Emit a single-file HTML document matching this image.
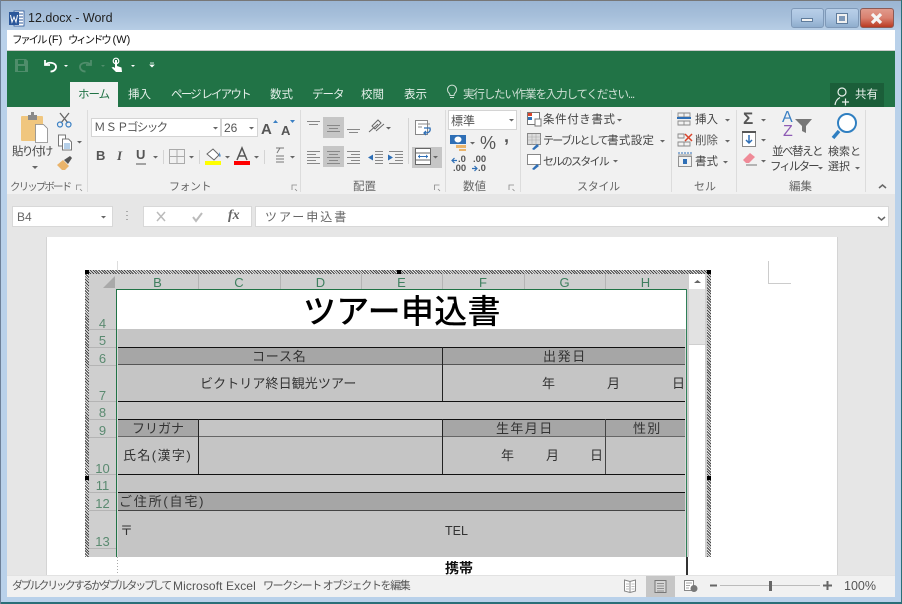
<!DOCTYPE html>
<html><head><meta charset="utf-8"><style>
html,body{margin:0;padding:0}
body{width:902px;height:604px;overflow:hidden;position:relative;background:#b9d1ea;font-family:"Liberation Sans","Noto Sans CJK JP",sans-serif;color:#444}
.b{position:absolute}
.t{position:absolute;white-space:nowrap;line-height:1;font-size:12px;font-family:"Liberation Sans","Noto Sans CJK JP",sans-serif}
.k{font-size:11px;letter-spacing:-1.7px}
.m{font-size:10.5px;letter-spacing:-2.2px}
.s{color:#333;font-size:13px;letter-spacing:0}
.h{color:#3f7f5f;font-size:13px;text-align:center;position:absolute;line-height:1}
.r{color:#5a8a70;font-size:13px;position:absolute;left:89px;width:27px;text-align:center;line-height:1}
svg{position:absolute;left:0;top:0}
</style></head><body>
<!-- title -->
<div class="b" style="left:0;top:0;width:902px;height:30px;background:linear-gradient(#9bb5d3,#a6bfda 50%,#b7cde5);border-top:1px solid #777;box-sizing:border-box"></div>
<div class="t" style="left:28px;top:12px;font-size:12.5px;color:#222">12.docx - Word</div>
<!-- menu -->
<div class="b" style="left:7px;top:30px;width:888px;height:20px;background:#fff"></div>
<div class="t" style="left:12px;top:35px;font-size:11px;color:#111"><span class="m">ファイル</span> (F)</div>
<div class="t" style="left:68px;top:35px;font-size:11px;color:#111"><span class="m">ウィンドウ</span> (W)</div>
<!-- green -->
<div class="b" style="left:7px;top:50px;width:888px;height:57px;background:#217346;border-top:1px solid #ccc;box-sizing:border-box"></div>
<div class="b" style="left:70px;top:82px;width:48px;height:25px;background:#f1f1f1"></div>
<div class="t" style="left:78px;top:90px;color:#217346;font-size:11.5px;letter-spacing:-1px">ホーム</div>
<div class="t" style="left:128px;top:90px;color:#e4efe9;font-size:11.5px">挿入</div>
<div class="t" style="left:171px;top:90px;color:#e4efe9;font-size:11.5px;letter-spacing:-1.8px">ページ レイアウト</div>
<div class="t" style="left:270px;top:90px;color:#e4efe9;font-size:11.5px">数式</div>
<div class="t" style="left:312px;top:90px;color:#e4efe9;font-size:11.5px;letter-spacing:-1px">データ</div>
<div class="t" style="left:361px;top:90px;color:#e4efe9;font-size:11.5px">校閲</div>
<div class="t" style="left:404px;top:90px;color:#e4efe9;font-size:11.5px">表示</div>
<div class="t" style="left:463px;top:90px;color:#cfe0d6;font-size:11.5px;letter-spacing:-1.15px">実行したい作業を入力してください...</div>
<div class="b" style="left:830px;top:83px;width:54px;height:24px;background:#1b5e39"></div>
<div class="t" style="left:855px;top:90px;color:#e8f0eb;font-size:11.5px">共有</div>
<!-- ribbon -->
<div class="b" style="left:7px;top:107px;width:888px;height:87px;background:#f1f1f1"></div>
<div class="b" style="left:7px;top:194px;width:888px;height:34px;background:#e6e6e6"></div>
<div class="b" style="left:87px;top:110px;width:1px;height:82px;background:#dcdcdc"></div>
<div class="b" style="left:300px;top:110px;width:1px;height:82px;background:#dcdcdc"></div>
<div class="b" style="left:445px;top:110px;width:1px;height:82px;background:#dcdcdc"></div>
<div class="b" style="left:520px;top:110px;width:1px;height:82px;background:#dcdcdc"></div>
<div class="b" style="left:671px;top:110px;width:1px;height:82px;background:#dcdcdc"></div>
<div class="b" style="left:736px;top:110px;width:1px;height:82px;background:#dcdcdc"></div>
<div class="b" style="left:865px;top:110px;width:1px;height:82px;background:#dcdcdc"></div>
<!-- ribbon boxes -->
<div class="b" style="left:91px;top:118px;width:130px;height:19px;background:#fff;border:1px solid #d4d4d4;box-sizing:border-box"></div>
<div class="b" style="left:221px;top:118px;width:37px;height:19px;background:#fff;border:1px solid #d4d4d4;box-sizing:border-box"></div>
<div class="b" style="left:448px;top:110px;width:69px;height:20px;background:#fff;border:1px solid #d4d4d4;box-sizing:border-box"></div>
<div class="b" style="left:323px;top:117px;width:21px;height:21px;background:#c6c6c6"></div>
<div class="b" style="left:323px;top:146px;width:21px;height:21px;background:#c6c6c6"></div>
<div class="b" style="left:412px;top:147px;width:30px;height:21px;background:#c6c6c6"></div>
<!-- ribbon text -->
<div class="t" style="left:12px;top:147px;font-size:11.5px;letter-spacing:-1.6px;color:#444">貼り付け</div>
<div class="t" style="left:10px;top:182px;font-size:10.5px;letter-spacing:-1.9px;color:#666">クリップボード</div>
<div class="t" style="left:169px;top:182px;font-size:11px;letter-spacing:-.5px;color:#666">フォント</div>
<div class="t" style="left:353px;top:182px;font-size:11.5px;color:#666">配置</div>
<div class="t" style="left:463px;top:182px;font-size:11.5px;color:#666">数値</div>
<div class="t" style="left:577px;top:182px;font-size:11px;letter-spacing:-.3px;color:#666">スタイル</div>
<div class="t" style="left:694px;top:182px;font-size:11px;color:#666">セル</div>
<div class="t" style="left:789px;top:182px;font-size:11.5px;color:#666">編集</div>
<div class="t" style="left:94px;top:123px;font-size:11.5px;color:#555;letter-spacing:-1.6px">Ｍ Ｓ Ｐゴシック</div>
<div class="t" style="left:224px;top:122px;font-size:12px;color:#555">26</div>
<div class="t" style="left:451px;top:115px;font-size:12px;color:#555">標準</div>
<div class="t" style="left:543px;top:115px;font-size:11.5px;color:#444;letter-spacing:.6px">条件付き書式</div>
<div class="t" style="left:543px;top:136px;font-size:11.5px;color:#444;letter-spacing:.3px"><span class="k">テーブルとして</span>書式設定</div>
<div class="t" style="left:543px;top:157px;font-size:11.5px;color:#444"><span class="k">セルのスタイル</span></div>
<div class="t" style="left:695px;top:115px;font-size:11.5px;color:#444">挿入</div>
<div class="t" style="left:695px;top:136px;font-size:11.5px;color:#555">削除</div>
<div class="t" style="left:695px;top:157px;font-size:11.5px;color:#444">書式</div>
<div class="t" style="left:772px;top:147px;font-size:11.5px;color:#444;letter-spacing:-1.5px">並べ替えと</div>
<div class="t" style="left:770px;top:162px;font-size:11.5px;color:#444;letter-spacing:-1.9px">フィルター</div>
<div class="t" style="left:828px;top:147px;font-size:11px;color:#444">検索と</div>
<div class="t" style="left:828px;top:162px;font-size:11px;color:#444">選択</div>
<div class="t" style="left:96px;top:149px;font-size:13px;font-weight:bold;color:#555">B</div>
<div class="t" style="left:117px;top:149px;font-size:13px;font-weight:bold;font-style:italic;font-family:'Liberation Serif',serif;color:#555">I</div>
<div class="t" style="left:136px;top:148px;font-size:13px;font-weight:bold;color:#555">U</div>
<div class="t" style="left:261px;top:122px;font-size:15px;font-weight:bold;color:#555">A</div>
<div class="t" style="left:281px;top:124px;font-size:13px;font-weight:bold;color:#555">A</div>
<div class="t" style="left:480px;top:134px;font-size:18px;color:#555">%</div>
<div class="t" style="left:504px;top:127px;font-size:18px;font-weight:bold;color:#555">,</div>
<div class="t" style="left:458px;top:155px;font-size:9.5px;font-weight:bold;color:#555">.0</div>
<div class="t" style="left:453px;top:164px;font-size:9.5px;font-weight:bold;color:#555">.00</div>
<div class="t" style="left:473px;top:155px;font-size:9.5px;font-weight:bold;color:#555">.00</div>
<div class="t" style="left:478px;top:164px;font-size:9.5px;font-weight:bold;color:#555">.0</div>
<div class="t" style="left:743px;top:110px;font-size:17px;font-weight:bold;color:#555">Σ</div>
<div class="t" style="left:782px;top:110px;font-size:16px;color:#3b80c4">A</div>
<div class="t" style="left:783px;top:124px;font-size:16px;color:#8e5bb5">Z</div>
<!-- formula bar -->
<div class="b" style="left:12px;top:206px;width:101px;height:21px;background:#fff;border:1px solid #d8d8d8;box-sizing:border-box"></div>
<div class="t" style="left:17px;top:211px;font-size:12px;color:#666">B4</div>
<div class="b" style="left:143px;top:206px;width:109px;height:21px;background:#fff;border:1px solid #d8d8d8;box-sizing:border-box"></div>
<div class="t" style="left:228px;top:209px;font-size:14px;font-weight:bold;font-style:italic;font-family:'Liberation Serif',serif;color:#666">fx</div>
<div class="b" style="left:255px;top:206px;width:634px;height:21px;background:#fff;border:1px solid #d8d8d8;box-sizing:border-box"></div>
<div class="t" style="left:265px;top:211px;font-size:12px;color:#666;letter-spacing:2px">ツアー申込書</div>
<!-- doc area -->
<div class="b" style="left:7px;top:228px;width:888px;height:347px;background:#e6e6e6"></div>
<div class="b" style="left:46px;top:237px;width:792px;height:338px;background:#fff;border-left:1px solid #d4d4d4;border-right:1px solid #d4d4d4;box-sizing:border-box"></div>
<div class="b" style="left:768px;top:261px;width:23px;height:23px;border-left:1px solid #ccc;border-bottom:1px solid #ccc;box-sizing:border-box"></div>
<div class="b" style="left:117px;top:261px;width:1px;height:9px;background:#ddd"></div>
<!-- hatched frame -->
<div class="b" style="left:85px;top:270px;width:626px;height:287px;background:repeating-linear-gradient(45deg,#444 0 1px,#eee 1px 2px)"></div>
<div class="b" style="left:89px;top:274px;width:618px;height:283px;background:#c5c5c5"></div>
<div class="b" style="left:85px;top:270px;width:4px;height:4px;background:#000"></div>
<div class="b" style="left:397px;top:270px;width:4px;height:4px;background:#000"></div>
<div class="b" style="left:707px;top:270px;width:4px;height:4px;background:#000"></div>
<div class="b" style="left:85px;top:476px;width:4px;height:4px;background:#000"></div>
<div class="b" style="left:707px;top:476px;width:4px;height:4px;background:#000"></div>
<!-- headers -->
<div class="b" style="left:89px;top:274px;width:600px;height:15px;background:#cfcfcf"></div>
<div class="b" style="left:89px;top:289px;width:28px;height:268px;background:#cfcfcf"></div>
<svg width="902" height="604" style="z-index:1"><path d="M115 276V288H103Z" fill="#a9a9a9"/></svg>
<div class="b" style="left:198px;top:274px;width:1px;height:15px;background:#b4b4b4"></div>
<div class="b" style="left:280px;top:274px;width:1px;height:15px;background:#b4b4b4"></div>
<div class="b" style="left:361px;top:274px;width:1px;height:15px;background:#b4b4b4"></div>
<div class="b" style="left:442px;top:274px;width:1px;height:15px;background:#b4b4b4"></div>
<div class="b" style="left:524px;top:274px;width:1px;height:15px;background:#b4b4b4"></div>
<div class="b" style="left:605px;top:274px;width:1px;height:15px;background:#b4b4b4"></div>
<div class="h" style="left:117px;width:81px;top:276px">B</div>
<div class="h" style="left:198px;width:82px;top:276px">C</div>
<div class="h" style="left:280px;width:81px;top:276px">D</div>
<div class="h" style="left:361px;width:81px;top:276px">E</div>
<div class="h" style="left:442px;width:82px;top:276px">F</div>
<div class="h" style="left:524px;width:81px;top:276px">G</div>
<div class="h" style="left:605px;width:81px;top:276px">H</div>
<div class="r" style="top:317px">4</div>
<div class="r" style="top:334px">5</div>
<div class="r" style="top:352px">6</div>
<div class="r" style="top:389px">7</div>
<div class="r" style="top:406px">8</div>
<div class="r" style="top:424px">9</div>
<div class="r" style="top:462px">10</div>
<div class="r" style="top:479px">11</div>
<div class="r" style="top:497px">12</div>
<div class="r" style="top:535px">13</div>
<div class="b" style="left:89px;top:329px;width:27px;height:1px;background:#b4b4b4"></div>
<div class="b" style="left:89px;top:347px;width:27px;height:1px;background:#b4b4b4"></div>
<div class="b" style="left:89px;top:365px;width:27px;height:1px;background:#b4b4b4"></div>
<div class="b" style="left:89px;top:401px;width:27px;height:1px;background:#b4b4b4"></div>
<div class="b" style="left:89px;top:419px;width:27px;height:1px;background:#b4b4b4"></div>
<div class="b" style="left:89px;top:437px;width:27px;height:1px;background:#b4b4b4"></div>
<div class="b" style="left:89px;top:474px;width:27px;height:1px;background:#b4b4b4"></div>
<div class="b" style="left:89px;top:492px;width:27px;height:1px;background:#b4b4b4"></div>
<div class="b" style="left:89px;top:510px;width:27px;height:1px;background:#b4b4b4"></div>
<div class="b" style="left:89px;top:548px;width:27px;height:1px;background:#b4b4b4"></div>
<!-- sheet -->
<div class="b" style="left:117px;top:329px;width:1px;height:228px;background:#d8d8d8"></div>
<div class="b" style="left:685px;top:329px;width:1px;height:228px;background:#d8d8d8"></div>
<div class="b" style="left:117px;top:289px;width:570px;height:40px;background:#fff"></div>
<div class="t" style="left:303px;top:294px;font-size:33px;color:#000;font-weight:500;line-height:36px;letter-spacing:.3px">ツアー申込書</div>
<!-- dark bands -->
<div class="b" style="left:118px;top:348px;width:567px;height:17px;background:#a6a6a6"></div>
<div class="b" style="left:118px;top:420px;width:80px;height:17px;background:#a6a6a6"></div>
<div class="b" style="left:443px;top:420px;width:242px;height:17px;background:#a6a6a6"></div>
<div class="b" style="left:118px;top:493px;width:567px;height:17px;background:#a6a6a6"></div>
<!-- h lines -->
<div class="b" style="left:118px;top:347px;width:567px;height:1px;background:#111"></div>
<div class="b" style="left:118px;top:364px;width:567px;height:1px;background:#555"></div>
<div class="b" style="left:118px;top:401px;width:567px;height:1px;background:#111"></div>
<div class="b" style="left:118px;top:419px;width:567px;height:1px;background:#111"></div>
<div class="b" style="left:118px;top:436px;width:567px;height:1px;background:#666"></div>
<div class="b" style="left:118px;top:474px;width:567px;height:1px;background:#111"></div>
<div class="b" style="left:118px;top:492px;width:567px;height:1px;background:#111"></div>
<div class="b" style="left:118px;top:510px;width:567px;height:1px;background:#444"></div>
<!-- v lines -->
<div class="b" style="left:442px;top:347px;width:1px;height:54px;background:#222"></div>
<div class="b" style="left:198px;top:419px;width:1px;height:55px;background:#222"></div>
<div class="b" style="left:442px;top:419px;width:1px;height:55px;background:#222"></div>
<div class="b" style="left:605px;top:419px;width:1px;height:55px;background:#444"></div>
<!-- sheet text -->
<div class="t s" style="left:252px;top:350px;letter-spacing:.8px">コース名</div>
<div class="t s" style="left:543px;top:350px;letter-spacing:1.6px">出発日</div>
<div class="t s" style="left:200px;top:377px;letter-spacing:.1px">ビクトリア終日観光ツアー</div>
<div class="t s" style="left:542px;top:377px">年</div>
<div class="t s" style="left:607px;top:377px">月</div>
<div class="t s" style="left:672px;top:377px">日</div>
<div class="t s" style="left:132px;top:422px">フリガナ</div>
<div class="t s" style="left:496px;top:422px;letter-spacing:1.4px">生年月日</div>
<div class="t s" style="left:633px;top:422px;letter-spacing:1.2px">性別</div>
<div class="t s" style="left:123px;top:449px;letter-spacing:1.4px">氏名(漢字)</div>
<div class="t s" style="left:501px;top:449px">年</div>
<div class="t s" style="left:546px;top:449px">月</div>
<div class="t s" style="left:590px;top:449px">日</div>
<div class="t s" style="left:119px;top:495px;letter-spacing:1.8px">ご住所(自宅)</div>
<div class="t s" style="left:120px;top:524px">〒</div>
<div class="t s" style="left:445px;top:525px;font-size:12.5px">TEL</div>
<!-- selection -->
<div class="b" style="left:116px;top:289px;width:571px;height:268px;border-left:1px solid #217346;border-right:1px solid #2f8058;border-top:1px solid #217346;box-sizing:border-box"></div>
<!-- scrollbar -->
<div class="b" style="left:687px;top:274px;width:20px;height:283px;background:#cfcfcf"></div>
<div class="b" style="left:689px;top:274px;width:16px;height:15px;background:#fff"></div>
<div class="b" style="left:689px;top:289px;width:16px;height:55px;background:#e2e2e2"></div>
<div class="b" style="left:689px;top:345px;width:16px;height:212px;background:#fff"></div>
<!-- below -->
<div class="t" style="left:445px;top:561px;font-size:14px;font-weight:bold;color:#111;height:14px;overflow:hidden">携帯</div>
<div class="b" style="left:686px;top:557px;width:2px;height:18px;background:#333"></div>
<div class="b" style="left:117px;top:557px;width:1px;height:18px;background:repeating-linear-gradient(#aaa 0 1px,#fff 1px 3px)"></div>
<!-- status -->
<div class="b" style="left:7px;top:575px;width:888px;height:22px;background:#f1f1f1;border-top:1px solid #e2e2e2;box-sizing:border-box"></div>
<div class="b" style="left:646px;top:576px;width:29px;height:21px;background:#c6c6c6"></div>
<div class="t" style="left:12px;top:581px;font-size:11px;color:#555;letter-spacing:-2.2px">ダブルクリックするかダブルタップして</div>
<div class="t" style="left:173px;top:580px;font-size:12px;color:#555;letter-spacing:.1px">Microsoft Excel</div>
<div class="t" style="left:263px;top:581px;font-size:11px;color:#555;letter-spacing:-1.35px">ワークシート オブジェクトを編集</div>
<div class="t" style="left:844px;top:580px;font-size:12.5px;color:#555">100%</div>
<!-- frame -->
<div class="b" style="left:0;top:30px;width:7px;height:574px;background:#b9d1ea"></div>
<div class="b" style="left:895px;top:30px;width:7px;height:574px;background:#b9d1ea"></div>
<div class="b" style="left:0;top:597px;width:902px;height:5px;background:#b9d1ea"></div>
<div class="b" style="left:0;top:602px;width:902px;height:2px;background:#2a6f78"></div>
<div class="b" style="left:901px;top:0;width:1px;height:604px;background:#2a6f78"></div>
<div class="b" style="left:0;top:0;width:1px;height:604px;background:#6d8098"></div>
<!-- caption buttons -->
<div class="b" style="left:791px;top:8px;width:33px;height:20px;border:1px solid #7f99b8;border-radius:3px;box-sizing:border-box;background:linear-gradient(#b9cfe8,#a9c3e0 50%,#8fadcd)"></div>
<div class="b" style="left:825px;top:8px;width:34px;height:20px;border:1px solid #7f99b8;border-radius:3px;box-sizing:border-box;background:linear-gradient(#b9cfe8,#a9c3e0 50%,#8fadcd)"></div>
<div class="b" style="left:860px;top:8px;width:34px;height:20px;border:1px solid #8b5a55;border-radius:3px;box-sizing:border-box;background:linear-gradient(#e09a8c,#d9806f 50%,#b93a22)"></div>
<div class="b" style="left:801px;top:18px;width:12px;height:4px;background:#f2f2f2;border:1px solid #5f7c9c;box-sizing:border-box"></div>
<div class="b" style="left:836px;top:13px;width:12px;height:11px;background:#f0f0f0;border:1px solid #5f7c9c;box-sizing:border-box"></div>
<div class="b" style="left:839px;top:16px;width:6px;height:5px;background:#7f99b8"></div>
<!-- icons -->
<svg width="902" height="604" style="z-index:5">
<!-- word icon -->
<rect x="14" y="11" width="10" height="15" fill="#fff" stroke="#2b579a" stroke-width=".8"/>
<path d="M17 14h6M17 17h6M17 20h6M17 23h6" stroke="#2b579a" stroke-width="1"/>
<rect x="9" y="12" width="10" height="13" fill="#2b579a"/>
<path d="M10.500 15l1.500 7 2-5 2 5 1.500-7" fill="none" stroke="#fff" stroke-width="1"/>
<!-- close x -->
<path d="M872 14l9 9M881 14l-9 9" stroke="#f5f5f5" stroke-width="3.200"/>
<!-- QAT -->
<path d="M15 59h11l2 2v11H15z" fill="#4f8d6b"/><rect x="18" y="60" width="6" height="4" fill="#217346"/><rect x="18" y="66" width="7" height="5" fill="#217346"/>
<path d="M45 60v5h5" fill="none" stroke="#fff" stroke-width="1.800"/><path d="M45.500 64.500c3-3 10-2 10.500 2 .3 3-2.500 5-5.500 5" fill="none" stroke="#fff" stroke-width="1.800"/>
<path d="M91 60v5h-5" fill="none" stroke="#4f8d6b" stroke-width="1.800"/><path d="M90.500 64.500c-3-3-10-2-10.500 2-.3 3 2.500 5 5.500 5" fill="none" stroke="#4f8d6b" stroke-width="1.800"/>
<circle cx="116" cy="61" r="2.800" fill="none" stroke="#fff" stroke-width="1.200"/><path d="M115 60h2v6l4.500 1.500.5 4.500h-6l-4.500-4.500 2-.5 1.500 1z" fill="#fff"/>
<path d="M64 65h4l-2 2zM131 65h4l-2 2z" fill="#fff"/><path d="M101 65h4l-2 2z" fill="#4f8d6b"/>
<path d="M150 63h4M150 65h4l-2 2z" stroke="#fff" stroke-width=".7" fill="#fff"/>
<!-- bulb -->
<path d="M449 96a4.500 4.500 0 1 1 6 0c-.8.8-1 1.500-1 2.500h-4c0-1-.2-1.700-1-2.500zM450 100.500h4" fill="none" stroke="#cfe0d6" stroke-width="1" transform="translate(0,-3)"/>
<!-- share -->
<circle cx="842" cy="92" r="4" fill="none" stroke="#e8f0eb" stroke-width="1.200"/><path d="M835 105c.5-4 2-6 5-7.500" fill="none" stroke="#e8f0eb" stroke-width="1.200"/><path d="M842 102h7M845.500 98.500v7" stroke="#e8f0eb" stroke-width="1.200"/>
<!-- paste -->
<rect x="21" y="116" width="22" height="25" rx="1" fill="#f0c67e"/>
<rect x="28" y="115" width="9" height="5" fill="#8a8a8a"/><rect x="31" y="112" width="3" height="3" fill="#8a8a8a"/>
<path d="M35.500 124.500h8l4 4v14h-12z" fill="#fff" stroke="#888" stroke-width=".8"/>
<path d="M32 166h6l-3 3z" fill="#666"/>
<!-- scissors -->
<path d="M60 113l8 10M69 113l-8 10" stroke="#666" stroke-width="1.300"/>
<circle cx="60" cy="124.500" r="2.500" fill="none" stroke="#3b80c4" stroke-width="1.200"/><circle cx="68.500" cy="124.500" r="2.500" fill="none" stroke="#3b80c4" stroke-width="1.200"/>
<!-- copy -->
<path d="M58.500 135h7v11h-7z" fill="#fff" stroke="#777"/><path d="M62.500 139h6l3 3v8h-9z" fill="#fff" stroke="#777"/><path d="M64 144h6M64 146h6M64 148h6" stroke="#3b80c4" stroke-width=".7"/>
<path d="M77 141h5l-2.500 2.500z" fill="#666"/>
<!-- brush -->
<path d="M57 165l6-5 6 6-4 4h-3z" fill="#eab46b"/><path d="M64 160l6-4 2 2-4 6z" fill="#555"/>
<!-- launchers -->
<g fill="none" stroke="#888" stroke-width=".8">
<path d="M76.500 190v-5h5M80 189l2 2M292 190v-5h5M295 189l2 2M434.500 190v-5h5M438 189l2 2M509 190v-5h5M512.500 189l2 2"/></g>
<g fill="#666">
<path d="M213 127h5l-2.500 2.500zM249 127h5l-2.500 2.500zM153 156h5l-2.500 2.500zM189 156h5l-2.500 2.500zM225 156h5l-2.500 2.500zM254 156h5l-2.500 2.500zM290 156h5l-2.500 2.500zM386 127h5l-2.500 2.500zM433 156h5l-2.500 2.500zM509 119h5l-2.500 2.500zM470 142h5l-2.500 2.500zM617 119h5l-2.500 2.500zM660 140h5l-2.500 2.500zM613 160h5l-2.500 2.500zM725 119h5l-2.500 2.500zM725 140h5l-2.500 2.500zM723 161h5l-2.500 2.500zM761 119h5l-2.500 2.500zM761 139h5l-2.500 2.500zM761 160h5l-2.500 2.500zM818 167h5l-2.500 2.500zM855 167h5l-2.500 2.500zM101 216h5l-2.500 2.500z"/>
<path d="M273 123l2.500-3 2.500 3z" fill="#3b80c4"/><path d="M290 120h5l-2.500 3z" fill="#3b80c4"/>
</g>
<!-- toolbar seps -->
<path d="M163.500 150v14M199.500 150v14M264.500 150v14M408.500 118v46" stroke="#d4d4d4"/>
<!-- underline, borders -->
<path d="M136 164h10" stroke="#555" stroke-width="1"/>
<g stroke="#aaa" fill="none"><rect x="169.500" y="149.500" width="15" height="14"/><path d="M177 150v14M170 156.500h15"/></g>
<!-- fill -->
<path d="M207 154l6-5 6 6-5 5z" fill="#fff" stroke="#666"/><path d="M219 152c2 3 2 5 .5 5" fill="#3b80c4"/>
<rect x="205" y="161" width="16" height="4" fill="#ff0"/>
<path d="M237 160l5-12 5 12M238.500 156h7" fill="none" stroke="#555" stroke-width="1.500"/>
<rect x="234" y="161" width="16" height="4" fill="#f00"/>
<!-- phonetic -->
<path d="M276 148h8M280 148l-3 5M276 156h8M276 159h8M276 162h8" stroke="#777" fill="none"/>
<!-- align -->
<g stroke="#888" stroke-width="1" fill="none">
<path d="M307 121.500h13M309 124.500h9"/>
<path d="M327 125.500h13M329 128.500h9M327 131.500h13"/>
<path d="M347 129.500h13M349 132.500h9"/>
<path d="M307 151.500h13M307 154.500h9M307 157.500h13M307 160.500h9M307 163.500h13"/>
<path d="M327 151.500h13M329 154.500h9M327 157.500h13M329 160.500h9M327 163.500h13"/>
<path d="M347 151.500h13M351 154.500h9M347 157.500h13M351 160.500h9M347 163.500h13"/>
<path d="M375 151.500h8M375 154.500h8M375 157.500h8M375 160.500h8M375 163.500h8M389 151.500h14"/>
<path d="M395 154.500h8M395 157.500h8M395 160.500h8M389 163.500h14"/>
</g>
<path d="M368 157.500l5-3v6zM393 157.500l-5-3v6z" fill="#2f6fb6"/>
<path d="M369 132l9-8M372 126l3 3 6-6-3-3zM376 131l8-7" fill="none" stroke="#666"/>
<!-- wrap -->
<rect x="415.500" y="120.500" width="12" height="14" fill="#fff" stroke="#888"/><path d="M418 124h12M418 127h4" stroke="#888"/><path d="M424 128h6c1 4-2 5-5 5M426 131l-2 2 2 2" fill="none" stroke="#2f6fb6" stroke-width="1.300"/>
<!-- merge -->
<rect x="415.500" y="148.500" width="15" height="16" fill="#fff" stroke="#666"/><path d="M415 153h16M415 160h16" stroke="#666"/><path d="M418 156.500h10" stroke="#2f6fb6"/><path d="M418 156.500l2-2v4zM428 156.500l-2-2v4z" fill="#2f6fb6"/>
<!-- currency -->
<rect x="450" y="135" width="16" height="9" fill="#2f6fb6"/><ellipse cx="458" cy="139.500" rx="3.500" ry="3" fill="#fff"/><rect x="456" y="145" width="10" height="3" fill="#eab46b"/><rect x="459" y="149" width="7" height="2" fill="#eab46b"/>
<path d="M452 160.500h5M454.500 158l-2.500 2.500 2.500 2.500M472 168.500h5M474.500 166l2.500 2.500-2.500 2.500" stroke="#2f6fb6" fill="none" stroke-width="1.200"/>
<!-- styles -->
<g>
<rect x="527.500" y="112.500" width="12" height="12" fill="#fff" stroke="#777"/><rect x="528" y="113" width="4" height="3" fill="#d9442b"/><rect x="528" y="117" width="4" height="3" fill="#2f6fb6"/><rect x="535" y="119" width="6" height="7" fill="#fff" stroke="#777"/>
<rect x="527.500" y="133.500" width="13" height="11" fill="#ddd" stroke="#888"/><path d="M528 137h13M528 140h13M532 134v11M536 134v11" stroke="#aaa" stroke-width=".6"/><path d="M532 149l5-5 2 2-5 4z" fill="#2f6fb6"/>
<rect x="527.500" y="154.500" width="13" height="10" fill="#fff" stroke="#888"/><path d="M532 169l5-5 2 2-5 4z" fill="#2f6fb6"/>
</g>
<!-- cells icons -->
<g stroke="#888" fill="none" stroke-width=".9">
<path d="M678 113h6v4h-6zM684 113h6v4h-6zM678 121h6v4h-6zM684 121h6v4h-6z"/>
<path d="M678 134h6v4h-6zM678 142h6v4h-6zM684 142h6v4h-6z"/>
<rect x="678.500" y="156.500" width="13" height="10"/><path d="M678 155h14"/>
</g>
<path d="M677 118h14" stroke="#2f6fb6" stroke-width="2"/><path d="M685 134l7 7M692 134l-7 7" stroke="#d9442b" stroke-width="1.500"/><rect x="683" y="159" width="4" height="5" fill="#2f6fb6"/><path d="M678 153h14" stroke="#2f6fb6" stroke-dasharray="2 1"/>
<!-- edit -->
<rect x="742.500" y="132.500" width="13" height="14" fill="#fff" stroke="#888"/><path d="M742 132h14" stroke="#555" stroke-width="2"/><path d="M749 135v8M746 140l3 3 3-3" fill="none" stroke="#2f6fb6" stroke-width="1.500"/>
<path d="M743 160l7-7 5 4-6 6h-3z" fill="#ef8a97"/><path d="M746 165h11" stroke="#777"/>
<path d="M795 119h17l-6 7v7l-4-2v-5z" fill="#777"/>
<circle cx="847" cy="123" r="9" fill="#fff" stroke="#2f7fc1" stroke-width="2"/><path d="M839 131l-6 7" stroke="#2f7fc1" stroke-width="3.500"/>
<!-- chevrons -->
<path d="M879 188l3.500-3 3.500 3" fill="none" stroke="#666" stroke-width="1.500"/>
<path d="M878 217l3.500 3 3.500-3" fill="none" stroke="#666" stroke-width="1.500"/>
<path d="M127 211v1M127 215v1M127 219v1" stroke="#aaa" stroke-width="2"/>
<path d="M157 212l8 9M165 212l-8 9" stroke="#bbb" stroke-width="1.500"/>
<path d="M193 217l3 4 6-8" fill="none" stroke="#bbb" stroke-width="2"/>
<!-- scroll up arrow -->
<path d="M694 283l3.500-3 3.500 3z" fill="#666"/>
<!-- status icons -->
<path d="M624.500 580l5.500 1.500 5.500-1.500v11l-5.500 1.500-5.500-1.500zM630 581.500v11" fill="#fff" stroke="#888"/>
<path d="M626 584h3M626 586.500h3M626 589h3M631.500 584h3M631.500 586.500h3M631.500 589h3" stroke="#aaa" stroke-width=".7"/>
<rect x="655" y="580.500" width="11" height="12" fill="#d6d6d6" stroke="#777"/><path d="M657 583.500h7M657 586h7M657 588.500h7M657 591h7" stroke="#777" stroke-width=".7"/>
<rect x="684.500" y="580.500" width="9" height="10" fill="#fff" stroke="#888"/><path d="M686 583h6M686 585.500h4M686 588h3" stroke="#888" stroke-width=".7"/><circle cx="694" cy="588.500" r="3.500" fill="#777"/>
<path d="M710 585.500h7" stroke="#666" stroke-width="2"/><path d="M720 585.500h100" stroke="#bbb"/><rect x="769" y="581" width="3" height="10" fill="#666"/><path d="M823 585.500h9M827.500 581v9" stroke="#666" stroke-width="2"/>
</svg>
</body></html>
